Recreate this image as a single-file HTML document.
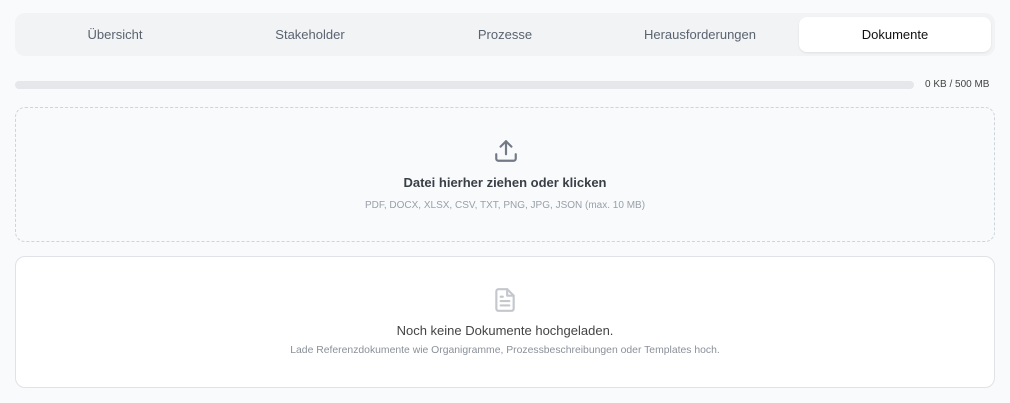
<!DOCTYPE html><html><head><style>
body{margin:0;background:#f8fafc;font-family:"Liberation Sans",sans-serif;width:1010px;height:403px;position:relative;overflow:hidden}
.tabs{position:absolute;left:15px;top:13px;width:980px;height:43px;background:#f1f3f5;border-radius:10px}
.tab{position:absolute;top:4px;height:35px;width:192px;line-height:35px;text-align:center;font-size:13px;color:#5b6370}
.act{background:#fff;color:#111;border-radius:8px;box-shadow:0 1px 2px rgba(0,0,0,.08)}
.bar{position:absolute;left:15px;top:81px;width:899px;height:8px;background:#e5e7eb;border-radius:4px}
.bt{position:absolute;left:925px;top:79px;font-size:10px;color:#444}
.drop{position:absolute;left:15px;top:107px;width:978px;height:133px;border:1px dashed #cfd4da;border-radius:10px}
.empty{position:absolute;left:15px;top:256px;width:978px;height:130px;border:1px solid #dfe2e6;border-radius:10px;background:#fff}
.c{position:absolute;left:0;width:100%;text-align:center}
</style></head><body>
<div class="tabs">
<div class="tab" style="left:4px">Übersicht</div>
<div class="tab" style="left:199px">Stakeholder</div>
<div class="tab" style="left:394px">Prozesse</div>
<div class="tab" style="left:589px">Herausforderungen</div>
<div class="tab act" style="left:784px">Dokumente</div>
</div>
<div class="bar"></div><div class="bt">0 KB / 500 MB</div>
<div class="drop">
<svg style="position:absolute;left:477px;top:30px" width="26" height="26" viewBox="0 0 24 24" fill="none" stroke="#737a85" stroke-width="2" stroke-linecap="round" stroke-linejoin="round"><path d="M21 15v4a2 2 0 0 1-2 2H5a2 2 0 0 1-2-2v-4"/><path d="M17 8l-5-5-5 5"/><path d="M12 3v12"/></svg>
<div class="c" style="top:67px;font-size:13px;color:#3a3f46;font-weight:bold">Datei hierher ziehen oder klicken</div>
<div class="c" style="top:92px;font-size:10px;color:#9aa0a8">PDF, DOCX, XLSX, CSV, TXT, PNG, JPG, JSON (max. 10 MB)</div>
</div>
<div class="empty">
<svg style="position:absolute;left:476px;top:30px" width="26" height="26" viewBox="0 0 24 24" fill="none" stroke="#c4c8cd" stroke-width="2" stroke-linecap="round" stroke-linejoin="round"><path d="M14 2H6a2 2 0 0 0-2 2v16a2 2 0 0 0 2 2h12a2 2 0 0 0 2-2V8z"/><path d="M14 2v6h6"/><path d="M16 13H8M16 17H8M10 9H8"/></svg>
<div class="c" style="top:66px;font-size:13px;color:#444">Noch keine Dokumente hochgeladen.</div>
<div class="c" style="top:88px;font-size:10.4px;color:#8a9099">Lade Referenzdokumente wie Organigramme, Prozessbeschreibungen oder Templates hoch.</div>
</div>
</body></html>
